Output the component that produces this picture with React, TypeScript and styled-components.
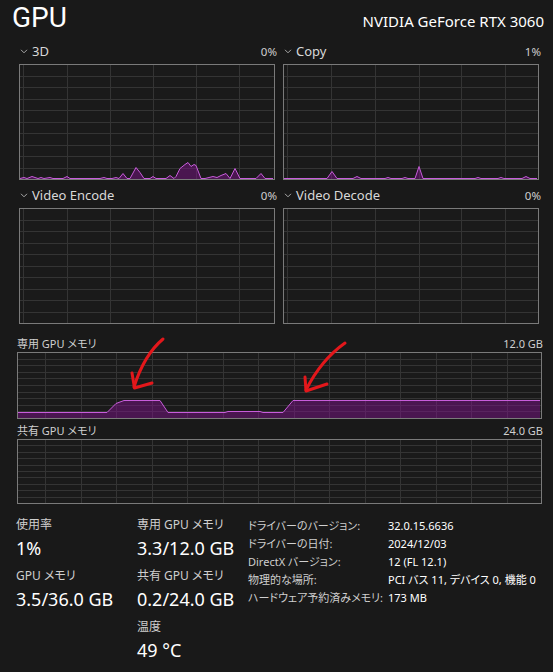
import React from "react";
import styled, { createGlobalStyle } from "styled-components";

const FONT = `"Noto Sans", "Noto Sans CJK JP", sans-serif`;

const GlobalStyle = createGlobalStyle`
  html, body { margin: 0; padding: 0; background: #191919; }
  body { font-family: ${FONT}; color: #ffffff; font-feature-settings: "palt"; }
`;

const Page = styled.div`
  position: relative;
  width: 553px;
  height: 672px;
  overflow: hidden;
  background: #191919;
`;

const Header = styled.header`
  box-sizing: border-box;
  height: 41px;
  padding: 1px 9px 0 12px;
  display: flex;
  justify-content: space-between;
  align-items: baseline;
`;

const Title = styled.h1`
  margin: 0;
  font-family: Roboto, "Noto Sans", sans-serif;
  font-size: 28px;
  line-height: 34px;
  font-weight: 400;
  color: #ffffff;
`;

const DeviceName = styled.div`
  font-size: 15px;
  color: #ffffff;
`;

const GraphGrid = styled.section`
  display: grid;
  grid-template-columns: 258px 258px;
  column-gap: 6px;
  row-gap: 5px;
  padding-left: 19px;
`;

const GraphCell = styled.div`
  display: flex;
  flex-direction: column;
`;

const GraphHeader = styled.div`
  display: flex;
  align-items: center;
  height: 20px;
  margin-bottom: 3px;
`;

const ChevronIcon = styled.svg`
  width: 8px;
  height: 5px;
  margin: 0 4px 0 1px;
  flex: none;
`;

const GraphTitle = styled.span`
  flex: 1;
  font-size: 13px;
  color: #d8d8d8;
`;

const GraphValue = styled.span`
  font-size: 11.5px;
  color: #cfcfcf;
`;

const ChartFrame = styled.div<{ $w: number; $h: number }>`
  box-sizing: border-box;
  width: ${(p) => p.$w}px;
  height: ${(p) => p.$h}px;
  border: 1px solid #7a7a7a;
  background: #1a1a1a;
  line-height: 0;
  & > svg { display: block; }
`;

const MemorySection = styled.section`
  margin-top: 12px;
  padding-left: 17px;
  display: flex;
  flex-direction: column;
`;

const MemHeader = styled.div<{ $gap?: number }>`
  width: 526px;
  height: 14px;
  margin-top: ${(p) => p.$gap ?? 0}px;
  margin-bottom: 2px;
  display: flex;
  justify-content: space-between;
  align-items: center;
  font-size: 11px;
  color: #cfcfcf;
`;

const Stats = styled.section`
  margin-top: 11px;
  padding-left: 16px;
  display: grid;
  grid-template-columns: 121px 111px auto;
  align-items: start;
`;

const StatColumn = styled.div`
  display: flex;
  flex-direction: column;
`;

const StatGroup = styled.div`
  display: flex;
  flex-direction: column;
  margin-bottom: 5px;
`;

const StatLabel = styled.div`
  font-size: 12px;
  line-height: 20px;
  color: #cfcfcf;
  white-space: nowrap;
`;

const StatValue = styled.div`
  font-size: 18px;
  line-height: 26px;
  color: #ffffff;
  white-space: nowrap;
`;

const InfoTable = styled.dl`
  margin: 2px 0 0 0;
  display: grid;
  grid-template-columns: 140px auto;
  grid-auto-rows: 18px;
  align-content: start;
  align-self: start;
  font-size: 11px;
  line-height: 18px;
`;

const InfoKey = styled.dt`
  margin: 0;
  color: #cfcfcf;
  white-space: nowrap;
`;

const InfoVal = styled.dd`
  margin: 0;
  color: #ffffff;
  white-space: nowrap;
`;

const Overlay = styled.svg`
  position: absolute;
  left: 0;
  top: 0;
  width: 553px;
  height: 672px;
  pointer-events: none;
`;

type Pt = [number, number];

interface ChartProps {
  x: number;
  y: number;
  w: number;
  h: number;
  gridX: number[];
  data?: Pt[];
}

const Chart: React.FC<ChartProps> = ({ x, y, w, h, gridX, data }) => {
  const ix = x + 1;
  const iy = y + 1;
  const iw = w - 2;
  const ih = h - 2;
  const rows = Array.from({ length: 9 }, (_, k) => Math.round(y + ((k + 1) * (h - 1)) / 10) + 0.5);
  const bottom = y + h - 1;
  let poly = "";
  let line = "";
  if (data && data.length) {
    line = data.map((p) => `${p[0]},${p[1] + 0.5}`).join(" ");
    poly = [
      `${data[0][0]},${bottom}`,
      ...data.map((p) => `${p[0]},${p[1] + 0.5}`),
      `${data[data.length - 1][0]},${bottom}`,
    ].join(" ");
  }
  return (
    <ChartFrame $w={w} $h={h}>
      <svg width={iw} height={ih} viewBox={`${ix} ${iy} ${iw} ${ih}`}>
        {gridX.map((gx, i) => (
          <line key={`v${i}`} x1={Math.round(gx) + 0.5} x2={Math.round(gx) + 0.5} y1={iy} y2={iy + ih} stroke="#343434" strokeWidth={1} shapeRendering="crispEdges" />
        ))}
        {rows.map((ry, i) => (
          <line key={`h${i}`} x1={ix} x2={ix + iw} y1={ry} y2={ry} stroke="#343434" strokeWidth={1} shapeRendering="crispEdges" />
        ))}
        {data && (
          <>
            <polygon points={poly} fill="rgba(134,18,147,0.45)" stroke="none" />
            <polyline points={line} fill="none" stroke="#c85ddb" strokeWidth={1} strokeLinejoin="round" />
          </>
        )}
      </svg>
    </ChartFrame>
  );
};

const Chevron = () => (
  <ChevronIcon viewBox="0 0 8 5">
    <path d="M1 0.8 L4 3.8 L7 0.8" fill="none" stroke="#a8a8a8" strokeWidth={1} />
  </ChevronIcon>
);

const leftGrid = [23, 67, 110, 153, 196, 239];
const rightGrid = [287, 331, 375, 419, 461, 505];
const memGrid = Array.from({ length: 14 }, (_, i) => 45 + 35.5 * i);

const data3D: Pt[] = [
  [20, 178], [24, 177], [27, 178], [32, 176], [35, 177], [38, 178], [41, 177], [44, 178], [50, 177], [53, 178],
  [63, 178], [67, 176], [70, 178], [100, 178], [104, 177], [107, 178], [112, 178], [116, 177], [119, 178],
  [123, 173], [127, 178], [130, 178], [136, 167], [140, 172], [144, 178], [150, 178], [153, 176], [156, 178],
  [166, 178], [170, 175], [174, 178], [176, 176], [180, 168], [185, 164], [188, 162], [191, 166], [194, 164],
  [196, 165], [201, 178], [205, 178], [209, 177], [213, 176], [217, 177], [221, 175], [226, 173], [230, 178],
  [235, 168], [240, 178], [256, 178], [261, 173], [265, 178], [273, 178],
];

const dataCopy: Pt[] = [
  [284, 178], [327, 178], [332, 171], [337, 178], [353, 178], [357, 176], [361, 178], [385, 178], [388, 177],
  [391, 178], [402, 178], [405, 177], [408, 178], [415, 178], [419, 166], [423, 178], [475, 178], [478, 177],
  [481, 178], [498, 178], [501, 177], [504, 178], [522, 178], [526, 176], [530, 178], [537, 178],
];

const dataMem: Pt[] = [
  [18, 412], [107, 412], [116, 403], [124, 400], [160, 400], [168, 412], [225, 412], [228, 411], [260, 411],
  [263, 412], [283, 412], [293, 400], [540, 400],
];

const infoRows: [string, string][] = [
  ["ドライバーのバージョン:", "32.0.15.6636"],
  ["ドライバーの日付:", "2024/12/03"],
  ["DirectX バージョン:", "12 (FL 12.1)"],
  ["物理的な場所:", "PCI バス 11, デバイス 0, 機能 0"],
  ["ハードウェア予約済みメモリ:", "173 MB"],
];

interface GraphProps {
  title: string;
  value: string;
  x: number;
  y: number;
  gridX: number[];
  data?: Pt[];
}

const Graph: React.FC<GraphProps> = ({ title, value, x, y, gridX, data }) => (
  <GraphCell>
    <GraphHeader>
      <Chevron />
      <GraphTitle>{title}</GraphTitle>
      <GraphValue>{value}</GraphValue>
    </GraphHeader>
    <Chart x={x} y={y} w={256} h={116} gridX={gridX} data={data} />
  </GraphCell>
);

export default function App() {
  return (
    <>
      <GlobalStyle />
      <Page>
        <Header>
          <Title>GPU</Title>
          <DeviceName>NVIDIA GeForce RTX 3060</DeviceName>
        </Header>

        <GraphGrid>
          <Graph title="3D" value="0%" x={19} y={64} gridX={leftGrid} data={data3D} />
          <Graph title="Copy" value="1%" x={283} y={64} gridX={rightGrid} data={dataCopy} />
          <Graph title="Video Encode" value="0%" x={19} y={208} gridX={leftGrid} />
          <Graph title="Video Decode" value="0%" x={283} y={208} gridX={rightGrid} />
        </GraphGrid>

        <MemorySection>
          <MemHeader>
            <span>専用 GPU メモリ</span>
            <span>12.0 GB</span>
          </MemHeader>
          <Chart x={17} y={352} w={525} h={67} gridX={memGrid} data={dataMem} />
          <MemHeader $gap={4}>
            <span>共有 GPU メモリ</span>
            <span>24.0 GB</span>
          </MemHeader>
          <Chart x={17} y={439} w={525} h={65} gridX={memGrid} />
        </MemorySection>

        <Stats>
          <StatColumn>
            <StatGroup>
              <StatLabel>使用率</StatLabel>
              <StatValue>1%</StatValue>
            </StatGroup>
            <StatGroup>
              <StatLabel>GPU メモリ</StatLabel>
              <StatValue>3.5/36.0 GB</StatValue>
            </StatGroup>
          </StatColumn>
          <StatColumn>
            <StatGroup>
              <StatLabel>専用 GPU メモリ</StatLabel>
              <StatValue>3.3/12.0 GB</StatValue>
            </StatGroup>
            <StatGroup>
              <StatLabel>共有 GPU メモリ</StatLabel>
              <StatValue>0.2/24.0 GB</StatValue>
            </StatGroup>
            <StatGroup>
              <StatLabel>温度</StatLabel>
              <StatValue>49 °C</StatValue>
            </StatGroup>
          </StatColumn>
          <InfoTable>
            {infoRows.map(([k, v]) => (
              <React.Fragment key={k}>
                <InfoKey>{k}</InfoKey>
                <InfoVal>{v}</InfoVal>
              </React.Fragment>
            ))}
          </InfoTable>
        </Stats>

        <Overlay viewBox="0 0 553 672">
          <g fill="none" stroke="#e3171b" strokeWidth={3} strokeLinecap="round" strokeLinejoin="round">
            <path d="M163 339 Q144 355 134 387" />
            <path d="M132 373 L134.5 388 L152 383" />
            <path d="M345 343 Q321 360 306 390" />
            <path d="M305 377 L306 391 L327 384" />
          </g>
        </Overlay>
      </Page>
    </>
  );
}
